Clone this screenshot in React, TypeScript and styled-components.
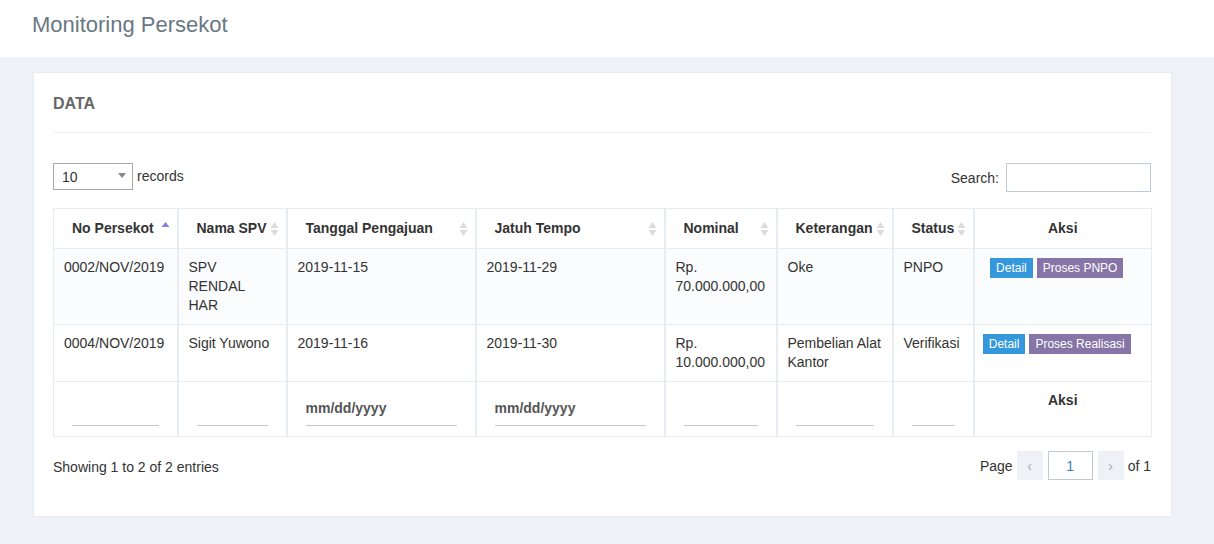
import React from "react";
import styled, { createGlobalStyle } from "styled-components";

const Global = createGlobalStyle`
  html, body { margin: 0; padding: 0; background: #eef1f5; }
  body { font-family: "Liberation Sans", Arial, sans-serif; font-size: 14px; color: #333; }
  * { box-sizing: border-box; }
`;

const Header = styled.header`
  height: 57px;
  background: #fff;
  padding-left: 32px;
  display: flex;
  align-items: center;
`;

const Title = styled.h1`
  margin: 0;
  margin-top: -8px;
  font-size: 22px;
  font-weight: 400;
  color: #697882;
`;

const Content = styled.main`
  padding: 15px 42px 28px 33px;
`;

const Card = styled.section`
  background: #fff;
  border: 1px solid #e7ecf1;
  padding: 0 20px 35px 19px;
`;

const CardHead = styled.div`
  padding: 20px 0 17px;
  border-bottom: 1px solid #eef1f5;
  font-size: 16px;
  line-height: 22px;
  font-weight: 700;
  color: #666;
`;

const Tools = styled.div`
  margin-top: 30px;
  height: 29px;
  display: flex;
  justify-content: space-between;
  align-items: flex-start;
`;

const Length = styled.label`
  display: flex;
  align-items: center;
  gap: 4px;
  height: 27px;
  color: #333;
`;

const LengthText = styled.span`
  margin-top: -1px;
`;

const FakeSelect = styled.div`
  width: 80px;
  height: 27px;
  border: 1px solid #a9a9a9;
  display: flex;
  align-items: center;
  justify-content: space-between;
  padding: 0 6px 0 8px;
  font-size: 14px;
  color: #333;
`;

const Caret = styled.span`
  width: 0;
  height: 0;
  border-left: 4px solid transparent;
  border-right: 4px solid transparent;
  border-top: 5px solid #888;
  margin-top: -2px;
`;

const SearchLabel = styled.label`
  display: flex;
  align-items: center;
  gap: 7px;
  height: 29px;
`;

const SearchInput = styled.input`
  width: 145px;
  height: 29px;
  border: 1px solid #c2cad8;
  outline: none;
  padding: 0 6px;
  font: inherit;
`;

const Table = styled.table`
  margin-top: 16px;
  width: 1098px;
  border-collapse: collapse;
  table-layout: fixed;
  border: 1px solid #e7ecf1;
`;

const cellBorders = `
  border: 1px solid #e7ecf1;
  border-left-width: 2px;
  border-right-width: 2px;
  &:first-child { border-left-width: 1px; }
  &:last-child { border-right-width: 1px; }
`;

const Th = styled.th<{ $center?: boolean }>`
  position: relative;
  height: 40px;
  padding: 0 18px 1px;
  ${cellBorders}
  font-size: 14px;
  font-weight: 700;
  text-align: ${(p) => (p.$center ? "center" : "left")};
  color: #333;
  white-space: nowrap;
`;

const SortIcon = styled.svg`
  position: absolute;
  right: 7px;
  top: 13px;
`;

const Tr = styled.tr<{ $striped?: boolean }>`
  background: ${(p) => (p.$striped ? "#fbfcfd" : "#fff")};
`;

const Td = styled.td<{ $center?: boolean }>`
  padding: 9px 10px;
  ${cellBorders}
  vertical-align: top;
  line-height: 19px;
  font-size: 14px;
  color: #333;
  text-align: ${(p) => (p.$center ? "center" : "left")};
`;

const FilterTd = styled.td<{ $center?: boolean }>`
  padding: 8px 18px 10px;
  ${cellBorders}
  vertical-align: top;
  line-height: 20px;
  font-weight: 700;
  text-align: ${(p) => (p.$center ? "center" : "left")};
`;

const FilterInput = styled.input`
  display: block;
  width: 100%;
  height: 36px;
  border: none;
  border-bottom: 1px solid #c2cad8;
  outline: none;
  padding: 0;
  background: transparent;
  font: 700 14px "Liberation Sans", Arial, sans-serif;
  color: #555;
`;

const Actions = styled.div`
  display: flex;
  justify-content: center;
  gap: 4px;
  margin-left: -12px;
`;

const Btn = styled.button<{ $variant: "blue" | "purple" }>`
  flex-shrink: 0;
  white-space: nowrap;
  height: 20px;
  padding: 0 6px;
  border: none;
  font: 12px "Liberation Sans", Arial, sans-serif;
  line-height: 20px;
  color: #fff;
  background: ${(p) => (p.$variant === "blue" ? "#3598dc" : "#8775a7")};
`;

const Footer = styled.div`
  margin-top: 15px;
  display: flex;
  justify-content: space-between;
  align-items: center;
  height: 29px;
`;

const Info = styled.div`
  color: #333;
  padding-top: 1px;
`;

const Pager = styled.div`
  display: flex;
  align-items: center;
  gap: 4px;
  margin-top: -2px;
`;

const PageBtn = styled.span`
  width: 26px;
  height: 29px;
  background: #eef1f5;
  color: #aaa;
  display: flex;
  align-items: center;
  justify-content: center;
  font-size: 14px;
`;

const PageInput = styled.div`
  width: 45px;
  height: 29px;
  border: 1px solid #c2cad8;
  display: flex;
  align-items: center;
  justify-content: center;
  color: #3c7bb5;
  margin: 0 1px;
`;

const Sort = ({ active }: { active?: boolean }) =>
  active ? (
    <SortIcon width="9" height="14" viewBox="0 0 9 14">
      <path d="M4.5 0 L8.5 5 L0.5 5 Z" fill="#8182d6" />
    </SortIcon>
  ) : (
    <SortIcon width="9" height="14" viewBox="0 0 9 14">
      <path d="M4.5 0 L8.5 6 L0.5 6 Z" fill="#dcdcdc" />
      <path d="M4.5 14 L8.5 8 L0.5 8 Z" fill="#dcdcdc" />
    </SortIcon>
  );

const widths = [124, 109, 189, 189, 112, 116, 81, 178];

const headers = [
  "No Persekot",
  "Nama SPV",
  "Tanggal Pengajuan",
  "Jatuh Tempo",
  "Nominal",
  "Keterangan",
  "Status",
];

const rows = [
  {
    no: "0002/NOV/2019",
    nama: <>SPV<br />RENDAL<br />HAR</>,
    tgl: "2019-11-15",
    jt: "2019-11-29",
    nominal: <>Rp.<br />70.000.000,00</>,
    ket: "Oke",
    status: "PNPO",
    proses: "Proses PNPO",
  },
  {
    no: "0004/NOV/2019",
    nama: "Sigit Yuwono",
    tgl: "2019-11-16",
    jt: "2019-11-30",
    nominal: <>Rp.<br />10.000.000,00</>,
    ket: <>Pembelian Alat<br />Kantor</>,
    status: "Verifikasi",
    proses: "Proses Realisasi",
  },
];

export default function App() {
  return (
    <>
      <Global />
      <Header>
        <Title>Monitoring Persekot</Title>
      </Header>
      <Content>
        <Card>
          <CardHead>DATA</CardHead>
          <Tools>
            <Length>
              <FakeSelect>
                10 <Caret />
              </FakeSelect>
              <LengthText>records</LengthText>
            </Length>
            <SearchLabel>
              Search:
              <SearchInput />
            </SearchLabel>
          </Tools>
          <Table>
            <colgroup>
              {widths.map((w, i) => (
                <col key={i} style={{ width: w }} />
              ))}
            </colgroup>
            <thead>
              <tr>
                {headers.map((h, i) => (
                  <Th key={h}>
                    {h}
                    <Sort active={i === 0} />
                  </Th>
                ))}
                <Th $center>Aksi</Th>
              </tr>
            </thead>
            <tbody>
              {rows.map((r, i) => (
                <Tr key={i} $striped={i === 0}>
                  <Td>{r.no}</Td>
                  <Td>{r.nama}</Td>
                  <Td>{r.tgl}</Td>
                  <Td>{r.jt}</Td>
                  <Td>{r.nominal}</Td>
                  <Td>{r.ket}</Td>
                  <Td>{r.status}</Td>
                  <Td $center>
                    <Actions>
                      <Btn $variant="blue">Detail</Btn>
                      <Btn $variant="purple">{r.proses}</Btn>
                    </Actions>
                  </Td>
                </Tr>
              ))}
              <Tr>
                <FilterTd><FilterInput /></FilterTd>
                <FilterTd><FilterInput /></FilterTd>
                <FilterTd><FilterInput readOnly value="mm/dd/yyyy" /></FilterTd>
                <FilterTd><FilterInput readOnly value="mm/dd/yyyy" /></FilterTd>
                <FilterTd><FilterInput /></FilterTd>
                <FilterTd><FilterInput /></FilterTd>
                <FilterTd><FilterInput /></FilterTd>
                <FilterTd $center>Aksi</FilterTd>
              </Tr>
            </tbody>
          </Table>
          <Footer>
            <Info>Showing 1 to 2 of 2 entries</Info>
            <Pager>
              <span>Page</span>
              <PageBtn>‹</PageBtn>
              <PageInput>1</PageInput>
              <PageBtn>›</PageBtn>
              <span>of 1</span>
            </Pager>
          </Footer>
        </Card>
      </Content>
    </>
  );
}
